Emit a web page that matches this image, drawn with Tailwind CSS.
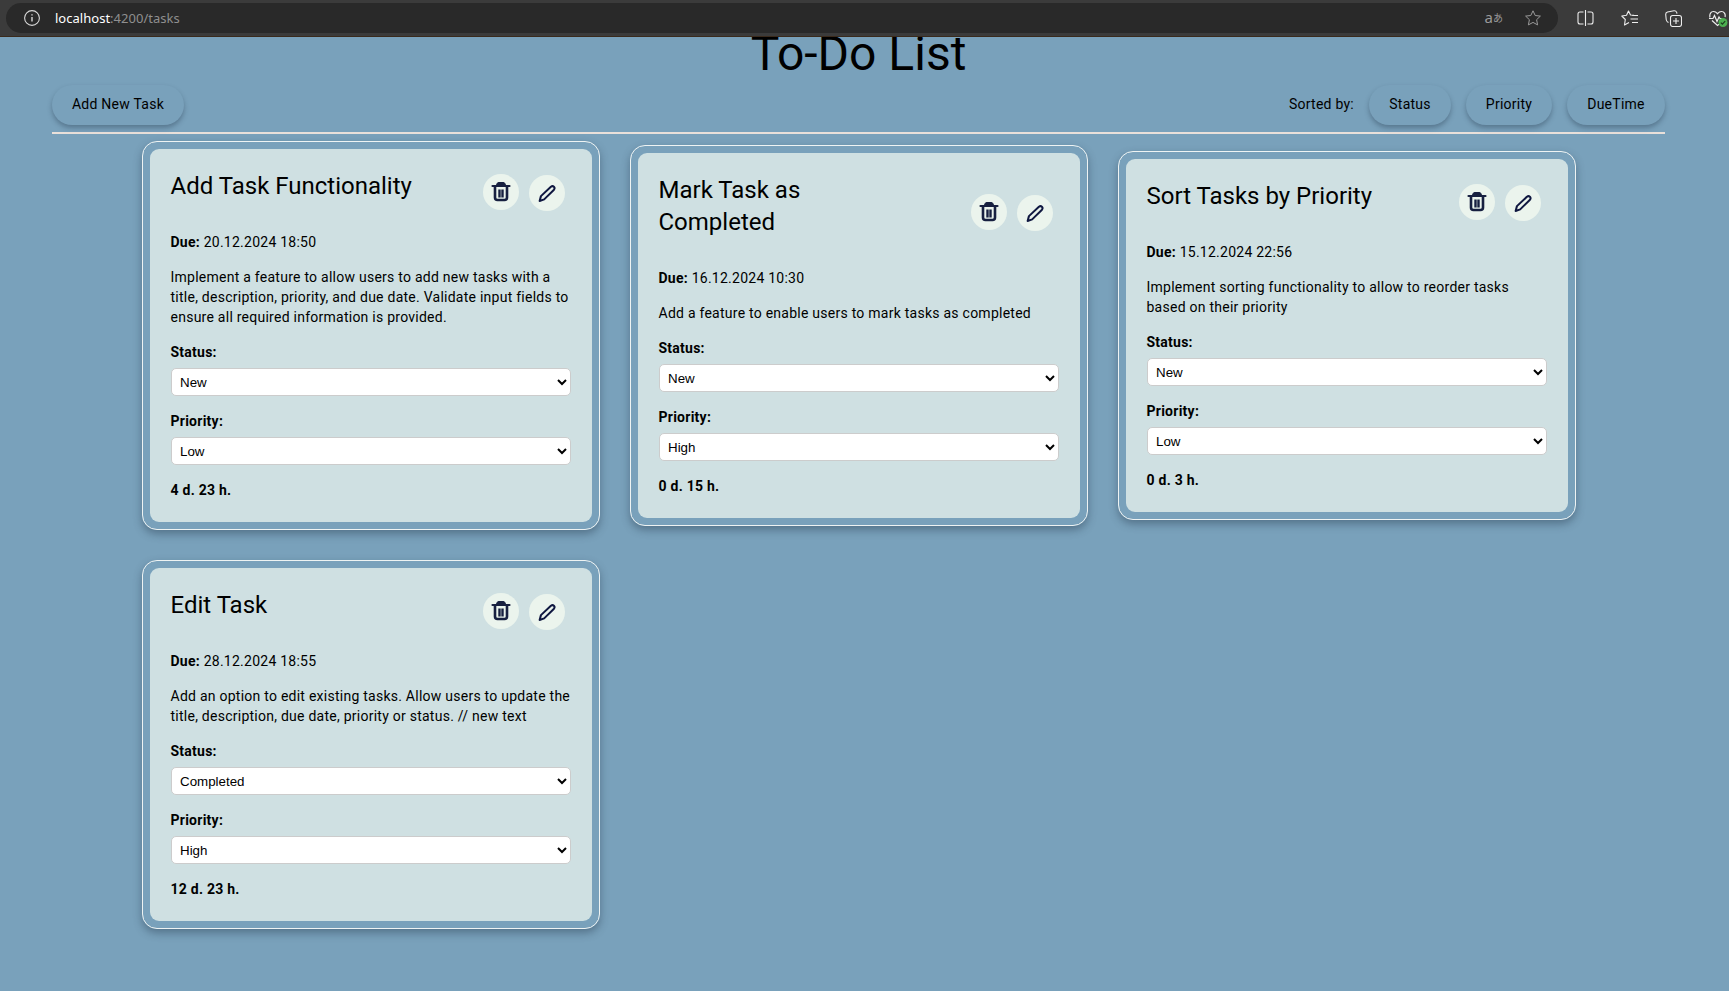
<!DOCTYPE html>
<html lang="en">
<head>
<meta charset="utf-8">
<title>To-Do List</title>
<script src="https://cdn.jsdelivr.net/npm/@tailwindcss/browser@4"></script>
</head>
<body class="h-[991px] overflow-hidden bg-[#79a1bb] font-[Roboto,sans-serif] text-sm leading-5 tracking-[0.25px] text-black">
<svg class="hidden">
  <symbol id="trash" viewBox="0 0 22 22" fill="none" stroke="#172040">
    <path d="M5 6v10.500q0 2.500 2.500 2.500h7q2.500 0 2.500-2.500V6" stroke-width="2.600"/>
    <path d="M2.500 5h17" stroke-width="2.200" stroke-linecap="round"/>
    <path d="M6.500 4.500c0-2 1-3 2.500-3h4c1.500 0 2.500 1 2.500 3z" fill="#172040" stroke-width="1"/>
    <path d="M9.500 8.500v8M12.500 8.500v8" stroke-width="2.400"/>
  </symbol>
  <symbol id="pencil" viewBox="0 0 24 24" fill="none" stroke="#0f1740" stroke-width="2.300" stroke-linejoin="round" stroke-linecap="round">
    <path d="M3 20.500l1.500-5.500L15.900 4.300c2.500-1.900 5.400.8 3.500 3.400L8.200 18.700z"/>
  </symbol>
</svg>

<header class="flex h-[37px] items-start border-b border-[#3a2a1c] bg-[#3b3b3b] pt-[3px] pl-1.5">
  <div class="flex h-[30px] w-[1552px] shrink-0 items-center rounded-full bg-[#292929] pl-[18px] font-['Noto_Sans',sans-serif] text-[13px] tracking-[0.02px]">
    <svg class="size-4" viewBox="0 0 16 16" fill="none" stroke="#d8d8d8"><circle cx="8" cy="8" r="7.400" stroke-width="1.100"/><path d="M8 7v4.500M8 4.200v1.400" stroke-width="1.400"/></svg>
    <span class="ml-[15px] text-white">localhost</span><span class="text-[#8f8f8f]">:4200/tasks</span>
    <span class="ml-auto flex items-center text-[15px] leading-none text-[#9a9a9a]"><span class="-mt-0.5">a</span><span class="font-['Noto_Sans_CJK_JP',sans-serif] text-[10px] leading-none">あ</span></span>
    <svg class="mr-[17px] ml-[22px] size-4 text-[#9a9a9a]" viewBox="0 0 16 16" fill="none" stroke="currentColor" stroke-linejoin="round"><path d="M8 .8l2.200 4.700 5.200.6-3.800 3.600 1 5.200L8 12.400l-4.600 2.500 1-5.200L.6 6.100l5.200-.6z"/></svg>
  </div>
  <div class="flex h-[30px] items-center gap-[27px] pl-[19px] text-[#ededed]">
    <svg class="h-4 w-[17px] shrink-0" viewBox="0 0 17 16" fill="none" stroke="currentColor" stroke-width="1.100"><path d="M8.500 0v16M6.500 2H3Q1 2 1 4v8q0 2 2 2h3.500M10.500 2H14q2 0 2 2v8q0 2-2 2h-3.500"/></svg>
    <svg class="size-[17px] shrink-0" viewBox="0 0 17 17" fill="none" stroke="currentColor" stroke-width="1.100" stroke-linejoin="round"><path d="M13 5.300L9.500 5 7.500 1 5.500 5.200.8 6l3.500 3.500-.8 5.500L8 12.500M11 5.500h6M9.500 9H17M11 12.500h6"/></svg>
    <svg class="size-[17px] shrink-0" viewBox="0 0 17 17" fill="none" stroke="currentColor" stroke-width="1.100"><rect x="5.500" y="5.500" width="11" height="11" rx="2.200"/><path d="M11 8v6M8 11h6M3.500 12.500l-1-.6Q1.500 11 1.200 9.500L.7 4.500Q.6 2.500 2.500 2L9 .8q2-.2 2.800 1.800l.2 1"/></svg>
    <svg class="h-[17px] w-[19px] shrink-0" viewBox="0 0 19 17" fill="none" stroke="currentColor" stroke-width="1.200"><path d="M1 7.500C.2 4 2 1.500 4.500 1.500c2 0 3 1 4 2.200 1-1.200 2-2.200 4-2.200 2.500 0 4.300 2.500 3.500 5.500M3 10.500l5.500 5 1.500-1.300M0 8.500h4l1.500-3 2.500 6 2-4.500 1 1.500h2"/><circle cx="14" cy="12.500" r="4.500" fill="#4caf50" stroke="none"/><path d="M11.800 12.600l1.600 1.600 2.800-3" stroke="#1b3a1d"/></svg>
  </div>
</header>

<main class="h-[954px] overflow-hidden">
  <h1 class="-mt-2 h-[50px] pr-3 text-center text-[48px] leading-[50px] tracking-[0]">To-Do List</h1>
  <nav class="mr-[64px] ml-[52px] flex h-[55px] items-start justify-between border-b-2 border-[#e9e0da] pt-1.5">
    <button class="h-10 w-[132px] rounded-full pb-0.5 tracking-[0.25px] shadow-[0_3px_5px_rgba(40,60,80,.4)]">Add New Task</button>
    <div class="flex items-center">
      <span class="mr-[15px] pb-0.5">Sorted by:</span>
      <button class="mr-[15px] h-10 w-[82px] rounded-full pb-0.5 tracking-[0.25px] shadow-[0_3px_5px_rgba(40,60,80,.4)]">Status</button>
      <button class="mr-[15px] h-10 w-[86px] rounded-full pb-0.5 tracking-[0.25px] shadow-[0_3px_5px_rgba(40,60,80,.4)]">Priority</button>
      <button class="h-10 w-[98px] rounded-full pb-0.5 tracking-[0.25px] shadow-[0_3px_5px_rgba(40,60,80,.4)]">DueTime</button>
    </div>
  </nav>
  <div id="tasks" class="ml-[142px] grid w-[1434px] grid-cols-3 items-center gap-x-[30px] gap-y-[30px] pt-[7px]"></div>
</main>

<template id="card">
  <article class="rounded-[15px] border border-[#eef3f3] p-[7px] shadow-[0_4px_8px_rgba(40,60,80,.45)]">
    <div class="rounded-[9px] bg-[#cfe0e2] pt-[21px] pr-5 pb-[22px] pl-[20.5px]">
      <div class="flex items-center justify-between">
        <h2 class="mb-[13px] w-[250px] text-[24px] leading-8 tracking-[0]"></h2>
        <div class="mr-[7px] flex gap-2.5">
          <button class="flex size-9 items-center justify-center rounded-full bg-[#ebf4ed]"><svg class="size-[22px]"><use href="#trash"/></svg></button>
          <button class="mt-px flex size-9 items-center justify-center rounded-full bg-[#ebf4ed]"><svg class="size-[21px]"><use href="#pencil"/></svg></button>
        </div>
      </div>
      <p class="mt-[17px]"><b>Due:</b> <span class="due"></span></p>
      <p class="desc mt-[15px]"></p>
      <p class="mt-[15px] font-bold">Status:</p>
      <select class="ml-[0.5px] mt-1.5 block h-7 w-[400px] rounded-[5px] border border-[#ccc] bg-white px-1 font-['Liberation_Sans',sans-serif] text-[13.333px] tracking-[0]"><option></option></select>
      <p class="mt-[15px] font-bold">Priority:</p>
      <select class="ml-[0.5px] mt-1.5 block h-7 w-[400px] rounded-[5px] border border-[#ccc] bg-white px-1 font-['Liberation_Sans',sans-serif] text-[13.333px] tracking-[0]"><option></option></select>
      <p class="left mt-[15px] font-bold"></p>
    </div>
  </article>
</template>
<script>
const tasks = [
  ["Add Task Functionality", "20.12.2024 18:50", "Implement a feature to allow users to add new tasks with a title, description, priority, and due date. Validate input fields to ensure all required information is provided.", "New", "Low", "4 d. 23 h."],
  ["Mark Task as Completed", "16.12.2024 10:30", "Add a feature to enable users to mark tasks as completed", "New", "High", "0 d. 15 h."],
  ["Sort Tasks by Priority", "15.12.2024 22:56", "Implement sorting functionality to allow to reorder tasks based on their priority", "New", "Low", "0 d. 3 h."],
  ["Edit Task", "28.12.2024 18:55", "Add an option to edit existing tasks. Allow users to update the title, description, due date, priority or status. // new text", "Completed", "High", "12 d. 23 h."]
];
for (const [title, due, desc, status, priority, left] of tasks) {
  const c = document.getElementById("card").content.cloneNode(true);
  c.querySelector("h2").textContent = title;
  c.querySelector(".due").textContent = due;
  c.querySelector(".desc").textContent = desc;
  const o = c.querySelectorAll("option");
  o[0].textContent = status;
  o[1].textContent = priority;
  c.querySelector(".left").textContent = left;
  document.getElementById("tasks").append(c);
}
</script>
</body>
</html>
